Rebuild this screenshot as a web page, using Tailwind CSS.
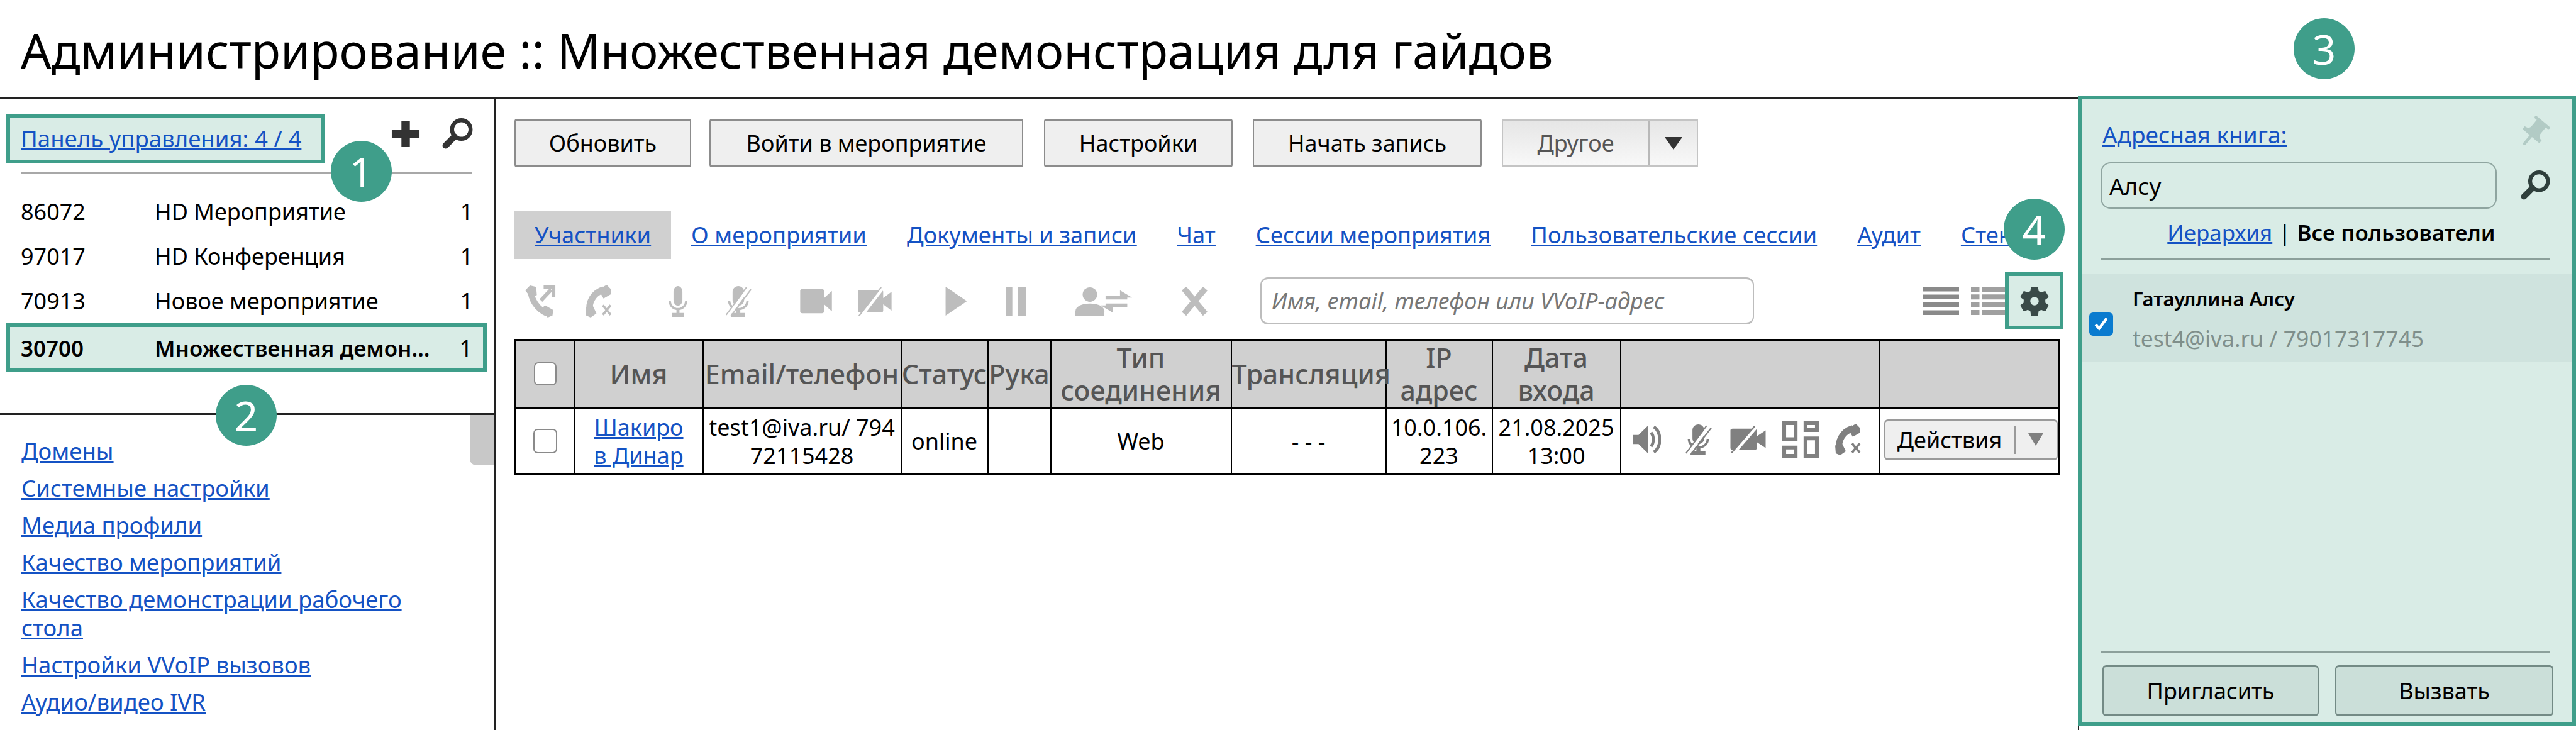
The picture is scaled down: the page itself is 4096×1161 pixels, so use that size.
<!DOCTYPE html>
<html lang="ru">
<head>
<meta charset="utf-8">
<title>Администрирование</title>
<script src="https://cdn.jsdelivr.net/npm/@tailwindcss/browser@4"></script>
</head>
<body class="bg-white">
<svg class="hidden" width="0" height="0">
  <defs>
    <symbol id="i-search" viewBox="0 0 24 24"><circle cx="15" cy="8.800" r="6.800" fill="none" stroke="currentColor" stroke-width="3"/><path d="M10 14 3.500 20.500" stroke="currentColor" stroke-width="4.600" stroke-linecap="round" fill="none"/></symbol>
    <symbol id="i-plus" viewBox="0 0 24 24"><path d="M9 1.500h6v7.300h8v6.400h-8v7.300H9v-7.300H1V8.800h8z" fill="currentColor" stroke="currentColor" stroke-linejoin="round"/></symbol>
    <symbol id="i-pin" viewBox="0 0 24 24"><path transform="rotate(40 12 12)" d="M16 9V3.500h1.500c.55 0 1-.45 1-1s-.45-1-1-1h-11c-.55 0-1 .45-1 1s.45 1 1 1H8V9c0 1.660-1.340 3-3.500 3v2.500h6.470v7l1 1 1-1v-7h6.530V12c-2.160 0-3.500-1.340-3.500-3z" fill="currentColor"/></symbol>
    <symbol id="i-phone" viewBox="0 0 24 24" preserveAspectRatio="none"><path d="M5 3C5 11 10 18 17 21" stroke="currentColor" stroke-width="4.500" fill="none"/><path d="M1 4 4.500.5 9 1.500l.5 6-4 2.500zM12 18.500l3.500-3.500 6 3.500-.5 4-3.500 1.500z" fill="currentColor"/><path d="M12.500 11.500 20 3.500M14.500 1.800h7.200v7.200" fill="none" stroke="currentColor" stroke-width="2.800"/></symbol>
    <symbol id="i-phonex" viewBox="0 0 24 24" preserveAspectRatio="none"><path d="M15 3.500C7 6 2.500 13 4.500 21" stroke="currentColor" stroke-width="5" fill="none"/><path d="M11 3.500 17.500 0l3.500 3.500-.5 3.500-5.500 3zM1 16.500l5.500-1.500 3 6-4.500 3-3.500-1.500z" fill="currentColor"/><path d="M14.500 15l6 7M20.500 15l-6 7" fill="none" stroke="currentColor" stroke-width="1.800"/></symbol>
    <symbol id="i-mic" viewBox="0 0 24 24" preserveAspectRatio="none"><path d="M12 15.500c2.800 0 5-1.900 5-4.300V4.800C17 2.500 14.800.5 12 .5S7 2.500 7 4.800v6.400c0 2.400 2.200 4.300 5 4.300zM20 11.500c0 3.400-3.600 5.700-8 5.700s-8-2.300-8-5.700H1.500c0 3.900 3.800 6.800 8.800 7.200V21H5.500v3h13v-3h-4.800v-2.300c5-.4 8.800-3.300 8.800-7.200z" fill="currentColor"/></symbol>
    <symbol id="i-micoff" viewBox="0 0 24 24" preserveAspectRatio="none"><path d="M12 15.500c2.800 0 5-1.900 5-4.300V4.800C17 2.500 14.800.5 12 .5S7 2.500 7 4.800v6.400c0 2.400 2.200 4.300 5 4.300zM19 11.500c0 3.400-3 5.700-7 5.700s-7-2.300-7-5.700H3c0 3.900 3.300 6.800 7.300 7.200V21H6v3h12v-3h-4.300v-2.300c4-.4 7.300-3.300 7.300-7.200z" fill="currentColor"/><path d="M4.500 21.500 21 2" stroke="#fff" stroke-width="2.600" fill="none"/><path d="M1.500 22.500 19 1.500M5.500 23.500 23 3" stroke="currentColor" stroke-width="1.100" fill="none"/></symbol>
    <symbol id="i-cam" viewBox="0 0 24 24" preserveAspectRatio="none"><path d="M2 2h14c.8 0 1.400.6 1.400 1.400v6.100l5.600-6v17l-5.600-6v6.100c0 .8-.6 1.400-1.400 1.400H2c-.8 0-1.400-.6-1.400-1.400V3.400C.6 2.600 1.200 2 2 2z" fill="currentColor"/></symbol>
    <symbol id="i-camoff" viewBox="0 0 24 24" preserveAspectRatio="none"><path d="M2 3h14c.8 0 1.400.6 1.400 1.400v5.100l5.600-5v15l-5.600-5v5.100c0 .8-.6 1.400-1.400 1.400H2c-.8 0-1.400-.6-1.400-1.400V4.400C.6 3.600 1.200 3 2 3z" fill="currentColor"/><path d="M3 23 18 0" stroke="#fff" stroke-width="2.600" fill="none"/><path d="M1 24 16 1" stroke="currentColor" stroke-width="1" fill="none"/></symbol>
    <symbol id="i-play" viewBox="0 0 24 24" preserveAspectRatio="none"><path d="M1 0 23 12 1 24z" fill="currentColor"/></symbol>
    <symbol id="i-pause" viewBox="0 0 24 24" preserveAspectRatio="none"><path d="M0 0h8v24H0zM15 0h9v24h-9z" fill="currentColor"/></symbol>
    <symbol id="i-user" viewBox="0 0 48 24" preserveAspectRatio="none"><ellipse cx="12" cy="6.500" rx="6" ry="6" fill="currentColor"/><path d="M0 24v-3.500C0 16.500 5 14 12 14s12 2.500 12 6.500V24z" fill="currentColor"/><path d="M25 7.500h18v3H25zM37 3l10 6h-10zM25 14h18v3H25zM31 21.500 21 15.500h10z" fill="currentColor"/></symbol>
    <symbol id="i-x" viewBox="0 0 24 24" preserveAspectRatio="none"><path d="M3 1.500 21 22.500M21 1.500 3 22.500" stroke="currentColor" stroke-width="5" fill="none"/></symbol>
    <symbol id="i-list" viewBox="0 0 24 24" preserveAspectRatio="none"><path d="M0 0h24v4H0zM0 6.700h24v4H0zM0 13.300h24v4H0zM0 20h24v4H0z" fill="currentColor"/></symbol>
    <symbol id="i-list2" viewBox="0 0 24 24" preserveAspectRatio="none"><path d="M0 0h6v4.300H0zM8 0h16v4.300H8zM0 6.500h6v4.300H0zM8 6.500h16v4.300H8zM0 13h6v4.300H0zM8 13h16v4.300H8zM0 19.700h6V24H0zM8 19.700h16V24H8z" fill="currentColor"/></symbol>
    <symbol id="i-gear" viewBox="2.400 2.400 19.200 19.200"><path fill-rule="evenodd" d="M19.140,12.940c0.040-0.300,0.060-0.610,0.060-0.940c0-0.320-0.020-0.640-0.070-0.940l2.030-1.580c0.180-0.140,0.230-0.410,0.120-0.610 l-1.920-3.320c-0.120-0.220-0.370-0.290-0.590-0.220l-2.390,0.960c-0.500-0.380-1.030-0.700-1.620-0.940L14.400,2.810c-0.040-0.240-0.240-0.410-0.480-0.410 h-3.840c-0.240,0-0.430,0.170-0.470,0.410L9.250,5.350C8.660,5.590,8.120,5.920,7.630,6.290L5.240,5.330c-0.220-0.080-0.470,0-0.590,0.220L2.740,8.870 C2.620,9.080,2.660,9.340,2.860,9.480l2.030,1.580C4.840,11.360,4.800,11.690,4.800,12s0.020,0.640,0.070,0.940l-2.030,1.580 c-0.180,0.140-0.230,0.410-0.120,0.610l1.920,3.320c0.120,0.220,0.370,0.290,0.590,0.220l2.390-0.960c0.500,0.380,1.030,0.700,1.620,0.940l0.360,2.540 c0.050,0.240,0.240,0.410,0.480,0.410h3.840c0.240,0,0.440-0.170,0.470-0.410l0.360-2.540c0.590-0.240,1.130-0.560,1.620-0.940l2.390,0.960 c0.220,0.080,0.470,0,0.590-0.220l1.920-3.320c0.120-0.220,0.070-0.470-0.120-0.610L19.140,12.940z M12,14.800c-1.540,0-2.800-1.260-2.800-2.800 s1.260-2.800,2.800-2.800s2.800,1.260,2.800,2.800S13.540,14.800,12,14.800z" fill="currentColor"/></symbol>
    <symbol id="i-speaker" viewBox="0 0 24 24" preserveAspectRatio="none"><path d="M0 8h5l8-8v24l-8-8H0z" fill="currentColor"/><path d="M15.500 6c1.500 1.500 2 3.500 2 6s-.5 4.500-2 6M18 1c3.500 2.500 5 6.500 5 11s-1.500 8.500-5 11" fill="none" stroke="currentColor" stroke-width="2.600"/></symbol>
    <symbol id="i-grid" viewBox="0 0 24 24" preserveAspectRatio="none"><path fill-rule="evenodd" d="M0 0h10v13H0zM2.500 2.500v8h5v-8zM14 0h10v7H14zM16.500 2.500v2h5v-2zM14 10h10v14H14zM16.500 12.500v9h5v-9zM0 16h10v8H0zM2.500 18.500v3h5v-3z" fill="currentColor"/></symbol>
  </defs>
</svg>

<div class="relative w-[4096px] h-[1161px] overflow-hidden font-['Noto_Sans',sans-serif] text-[36px] leading-[45px] text-black">
  <header class="h-[154px] border-b-[3px] border-[#222] pl-[33px] box-content">
    <h1 class="pt-[30px] text-[76px] leading-[100px] font-normal whitespace-nowrap">Администрирование :: Множественная демонстрация для гайдов</h1>
  </header>

  <div class="flex h-[1004px]">
    <!-- left -->
    <aside class="w-[788px] shrink-0 border-r-[3px] border-[#222] flex flex-col">
      <div class="h-[503px] border-b-[3px] border-[#222] relative">
        <div class="flex items-start">
          <a class="mt-[24px] ml-[10px] w-[507px] h-[79px] border-[6px] border-[#3f9e8a] bg-[#d9ece6] pl-[17px] flex items-center underline text-[#1452c4] whitespace-nowrap text-[36.600px]">Панель управления: 4 / 4</a>
          <svg class="w-[46px] h-[46px] ml-[105px] mt-[33px] text-[#333]"><use href="#i-plus"/></svg>
          <svg class="w-[52px] h-[52px] ml-[33px] mt-[30px] text-[#333]"><use href="#i-search"/></svg>
        </div>
        <div class="ml-[33px] mr-[33px] w-[718px] h-[3px] bg-[#a8a8a8] mt-[14px]"></div>
        <ul class="mt-[24px]">
          <li class="flex h-[71px] items-center pl-[33px] pr-[33px]"><span class="w-[213px]">86072</span><span class="flex-1">HD Мероприятие</span><span>1</span></li>
          <li class="flex h-[71px] items-center pl-[33px] pr-[33px]"><span class="w-[213px]">97017</span><span class="flex-1">HD Конференция</span><span>1</span></li>
          <li class="flex h-[71px] items-center pl-[33px] pr-[33px]"><span class="w-[213px]">70913</span><span class="flex-1">Новое мероприятие</span><span>1</span></li>
          <li class="flex h-[78px] w-[764px] ml-[10px] items-center pl-[17px] pr-[17px] border-[6px] border-[#3f9e8a] bg-[#d9ece6] font-semibold text-[35px]"><span class="w-[213px]">30700</span><span class="flex-1 whitespace-nowrap">Множественная демон...</span><span class="font-normal text-[36px]">1</span></li>
        </ul>
      </div>
      <div class="relative flex-1 pl-[34px] pt-[35px]">
        <div class="absolute right-0 top-0 w-[38px] h-[80px] bg-[#c8c8c8] rounded-bl-[10px]"></div>
        <ul class="w-[650px] flex flex-col gap-[14px] text-[#1452c4] underline text-[36.500px]">
          <li>Домены</li>
          <li>Системные настройки</li>
          <li>Медиа профили</li>
          <li>Качество мероприятий</li>
          <li>Качество демонстрации рабочего стола</li>
          <li>Настройки VVoIP вызовов</li>
          <li>Аудио/видео IVR</li>
        </ul>
      </div>
    </aside>

    <!-- main -->
    <main class="w-[2516px] shrink-0 pl-[30px]">
      <div class="flex mt-[32px] h-[77px]">
        <button class="w-[281px] h-[77px] bg-[#efefef] border-2 border-t-[3px] border-b-[3px] border-[#8c8c8c] rounded-[4px]">Обновить</button>
        <button class="w-[499px] h-[77px] ml-[29px] bg-[#efefef] border-2 border-t-[3px] border-b-[3px] border-[#8c8c8c] rounded-[4px]">Войти в мероприятие</button>
        <button class="w-[300px] h-[77px] ml-[33px] bg-[#efefef] border-2 border-t-[3px] border-b-[3px] border-[#8c8c8c] rounded-[4px]">Настройки</button>
        <button class="w-[364px] h-[77px] ml-[32px] bg-[#efefef] border-2 border-t-[3px] border-b-[3px] border-[#8c8c8c] rounded-[4px]">Начать запись</button>
        <div class="w-[312px] h-[77px] ml-[32px] flex border-2 border-t-[3px] border-b-[3px] border-[#c4c4c4] bg-gradient-to-b from-[#e6e6e6] to-[#f8f8f8]">
          <span class="w-[233px] text-center leading-[71px] text-[#555] border-r-2 border-[#b8b8b8]">Другое</span>
          <span class="flex-1 flex items-center justify-center"><span class="w-0 h-0 border-x-[14px] border-x-transparent border-t-[20px] border-t-[#333]"></span></span>
        </div>
      </div>

      <nav class="flex mt-[69px] h-[77px] items-center gap-[64px] text-[#1452c4] underline whitespace-nowrap w-[2454px] overflow-hidden text-[36.400px]">
        <a class="h-[77px] px-[32px] -mr-[32px] bg-[#d0d0d0] flex items-center">Участники</a>
        <a>О мероприятии</a>
        <a>Документы и записи</a>
        <a>Чат</a>
        <a>Сессии мероприятия</a>
        <a>Пользовательские сессии</a>
        <a>Аудит</a>
        <a>Стенограмма</a>
      </nav>

      <div class="flex items-center h-[91px] mt-[21px] w-[2464px]">
        <svg class="w-[52px] h-[52px] ml-[15px] text-[#bdbdbd]"><use href="#i-phone"/></svg>
        <svg class="w-[49px] h-[52px] ml-[44px] text-[#bdbdbd]"><use href="#i-phonex"/></svg>
        <svg class="w-[34px] h-[50px] ml-[83px] text-[#bdbdbd]"><use href="#i-mic"/></svg>
        <svg class="w-[44px] h-[50px] ml-[57px] text-[#bdbdbd]"><use href="#i-micoff"/></svg>
        <svg class="w-[54px] h-[46px] ml-[75px] text-[#bdbdbd]"><use href="#i-cam"/></svg>
        <svg class="w-[57px] h-[48px] ml-[38px] text-[#bdbdbd]"><use href="#i-camoff"/></svg>
        <svg class="w-[37px] h-[46px] ml-[82px] text-[#bdbdbd]"><use href="#i-play"/></svg>
        <svg class="w-[32px] h-[46px] ml-[60px] text-[#bdbdbd]"><use href="#i-pause"/></svg>
        <svg class="w-[92px] h-[46px] ml-[79px] text-[#bdbdbd]"><use href="#i-user"/></svg>
        <svg class="w-[45px] h-[46px] ml-[75px] text-[#bdbdbd]"><use href="#i-x"/></svg>
        <div class="w-[785px] h-[75px] ml-[82px] border-2 border-t-[3px] border-b-[3px] border-[#bdbdbd] rounded-[12px] flex items-center pl-[16px] italic text-[36px] text-[#777] whitespace-nowrap">Имя, email, телефон или VVoIP-адрес</div>
        <svg class="w-[57px] h-[45px] ml-[269px] text-[#8a8a8a]"><use href="#i-list"/></svg>
        <svg class="w-[54px] h-[45px] ml-[19px] text-[#a0a0a0]"><use href="#i-list2"/></svg>
        <div class="w-[93px] h-[91px] border-[6px] border-[#3f9e8a] bg-[#d9ece6] flex items-center justify-center text-[#3a4a48]"><svg class="w-[46px] h-[46px]"><use href="#i-gear"/></svg></div>
      </div>

      <table class="table-fixed border-collapse w-[2454px] mt-[15px] text-center border-[3px] border-black">
        <colgroup><col class="w-[94px]"><col class="w-[204px]"><col class="w-[315px]"><col class="w-[138px]"><col class="w-[100px]"><col class="w-[287px]"><col class="w-[246px]"><col class="w-[169px]"><col class="w-[204px]"><col class="w-[412px]"><col class="w-[285px]"></colgroup>
        <thead>
          <tr class="h-[108px] bg-[#d0d0d0] text-[#555] leading-[52px] text-[43px] font-medium">
            <th class="border-2 border-black border-b-[3px] font-medium"><span class="block mx-auto w-[36px] h-[37px] bg-white border-2 border-[#8a8a8a] rounded-[7px]"></span></th>
            <th class="border-2 border-black border-b-[3px] font-medium">Имя</th>
            <th class="border-2 border-black border-b-[3px] font-medium whitespace-nowrap">Email/телефон</th>
            <th class="border-2 border-black border-b-[3px] font-medium">Статус</th>
            <th class="border-2 border-black border-b-[3px] font-medium">Рука</th>
            <th class="border-2 border-black border-b-[3px] font-medium">Тип соединения</th>
            <th class="border-2 border-black border-b-[3px] font-medium">Трансляция</th>
            <th class="border-2 border-black border-b-[3px] font-medium">IP<br>адрес</th>
            <th class="border-2 border-black border-b-[3px] font-medium">Дата<br>входа</th>
            <th class="border-2 border-black border-b-[3px]"></th>
            <th class="border-2 border-black border-b-[3px]"></th>
          </tr>
        </thead>
        <tbody>
          <tr class="h-[106px]">
            <td class="border-2 border-black"><span class="block mx-auto w-[38px] h-[39px] bg-white border-2 border-[#8a8a8a] rounded-[7px]"></span></td>
            <td class="border-2 border-black px-[22px] text-[#1452c4] underline break-all">Шакиров Динар</td>
            <td class="border-2 border-black break-all">test1@iva.ru/ 79472115428</td>
            <td class="border-2 border-black">online</td>
            <td class="border-2 border-black"></td>
            <td class="border-2 border-black">Web</td>
            <td class="border-2 border-black">- - -</td>
            <td class="border-2 border-black break-all">10.0.106.223</td>
            <td class="border-2 border-black px-[4px]">21.08.2025 13:00</td>
            <td class="border-2 border-black">
              <div class="flex items-center text-[#808080] pl-[18px] -mt-[6px]">
                <svg class="w-[45px] h-[44px]"><use href="#i-speaker"/></svg>
                <svg class="w-[45px] h-[50px] ml-[37px]"><use href="#i-micoff"/></svg>
                <svg class="w-[60px] h-[45px] ml-[27px]"><use href="#i-camoff"/></svg>
                <svg class="w-[58px] h-[58px] ml-[24px]"><use href="#i-grid"/></svg>
                <svg class="w-[48px] h-[50px] ml-[24px]"><use href="#i-phonex"/></svg>
              </div>
            </td>
            <td class="border-2 border-black">
              <div class="ml-[6px] w-[276px] h-[65px] flex items-center bg-[#efefef] border-2 border-t-[3px] border-b-[3px] border-[#9a9a9a] rounded-[6px] -mt-[5px]">
                <span class="w-[207px] text-center border-r-2 border-[#9a9a9a]">Действия</span>
                <span class="flex-1 flex justify-center"><span class="w-0 h-0 border-x-[12px] border-x-transparent border-t-[20px] border-t-[#808080]"></span></span>
              </div>
            </td>
          </tr>
        </tbody>
      </table>
    </main>

    <!-- right -->
    <div class="w-[792px] shrink-0 border-l-2 border-[#222] relative">
      <section class="absolute -left-[2px] -top-[5px] w-[792px] h-[1002px] border-[6px] border-[#3f9e8a] bg-[#d9ece6] flex flex-col">
        <div class="flex items-start pl-[33px] h-[100px] pt-[33px]">
          <a class="text-[#1452c4] underline whitespace-nowrap text-[37px]">Адресная книга:</a>
          <svg class="w-[56px] h-[56px] ml-[364px] -mt-[7px] text-[#b2cbc5]"><use href="#i-pin"/></svg>
        </div>
        <div class="flex items-center pl-[30px]">
          <div class="w-[630px] h-[74px] border-2 border-[#8fa5a0] rounded-[16px] pl-[12px] flex items-center text-[37px]">Алсу</div>
          <svg class="w-[50px] h-[50px] ml-[36px] text-[#2f3f3c]"><use href="#i-search"/></svg>
        </div>
        <div class="flex justify-center items-center mt-[15px] pl-[14px] whitespace-nowrap text-[35px]"><a class="text-[#1452c4] underline">Иерархия</a><span class="mx-[10px]">|</span><b class="font-semibold">Все пользователи</b></div>
        <div class="ml-[30px] w-[714px] h-[3px] bg-[#8ca09b] mt-[19px]"></div>
        <div class="flex items-center h-[140px] mt-[22px] bg-[#cfe3de] relative">
          <span class="ml-[12px] w-[38px] h-[37px] mt-[18px] rounded-[6px] bg-[#0a7bcf] flex items-center justify-center shrink-0"><svg class="w-[26px] h-[26px]" viewBox="0 0 24 24"><path d="M4 13l5 6L20 4" fill="none" stroke="#fff" stroke-width="4"/></svg></span>
          <div class="ml-[31px]">
            <div class="font-semibold text-[31px] leading-[46px] whitespace-nowrap">Гатауллина Алсу</div>
            <div class="text-[#7f8f8b] mt-[18px] whitespace-nowrap text-[35.500px]">test4@iva.ru / 79017317745</div>
          </div>
        </div>
        <div class="mt-auto">
          <div class="ml-[30px] w-[714px] h-[3px] bg-[#8ca09b]"></div>
          <div class="flex pl-[33px] mt-[20px] mb-[9px]">
            <button class="w-[344px] h-[81px] bg-[#cbdfd9] border-2 border-t-[3px] border-b-[3px] border-[#738a85] rounded-[6px]">Пригласить</button>
            <button class="w-[347px] h-[81px] ml-[26px] bg-[#cbdfd9] border-2 border-t-[3px] border-b-[3px] border-[#738a85] rounded-[6px]">Вызвать</button>
          </div>
        </div>
      </section>
    </div>
  </div>

  <!-- numbered markers -->
  <span class="absolute left-[526px] top-[224px] w-[97px] h-[97px] rounded-full bg-[#3f9e8a] text-white text-[66px] leading-[97px] text-center">1</span>
  <span class="absolute left-[343px] top-[612px] w-[97px] h-[97px] rounded-full bg-[#3f9e8a] text-white text-[66px] leading-[97px] text-center">2</span>
  <span class="absolute left-[3647px] top-[29px] w-[97px] h-[97px] rounded-full bg-[#3f9e8a] text-white text-[66px] leading-[97px] text-center">3</span>
  <span class="absolute left-[3186px] top-[316px] w-[97px] h-[97px] rounded-full bg-[#3f9e8a] text-white text-[66px] leading-[97px] text-center">4</span>
</div>
</body>
</html>
